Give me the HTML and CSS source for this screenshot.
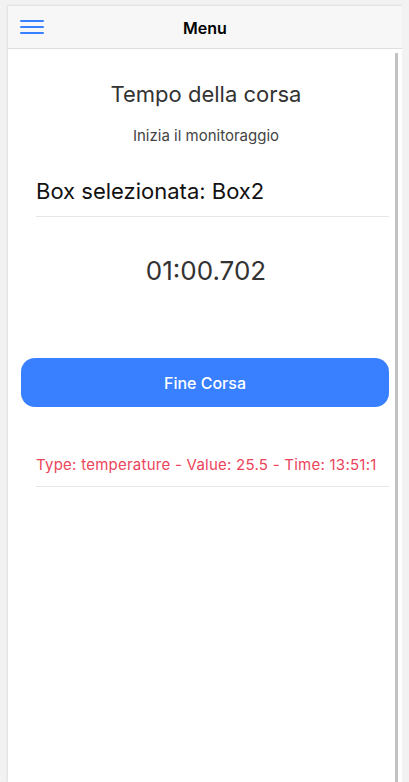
FILE: index.html
```html
<!DOCTYPE html>
<html lang="it">
<head>
<meta charset="utf-8">
<title>Menu</title>
<link rel="stylesheet" href="styles.css">
</head>
<body>
<div class="frame">
  <header class="toolbar">
    <button class="menu-btn" aria-label="menu">
      <svg width="24" height="16" viewBox="0 0 24 16"><path d="M1 2h22M1 8h22M1 14h22" stroke="#3880ff" stroke-width="2" stroke-linecap="round" fill="none"/></svg>
    </button>
    <div class="toolbar-title">Menu</div>
    <div class="toolbar-spacer"></div>
  </header>
  <div class="content-wrap">
    <main class="content">
      <h1 class="title">Tempo della corsa</h1>
      <p class="subtitle">Inizia il monitoraggio</p>
      <div class="item box-item">Box selezionata: Box2</div>
      <div class="timer">01:00.702</div>
      <button class="end-btn">Fine Corsa</button>
      <div class="item reading">Type: temperature - Value: 25.5 - Time: 13:51:1</div>
    </main>
    <div class="scrollbar"></div>
  </div>
</div>
</body>
</html>
```

FILE: styles.css
```css
* { box-sizing: border-box; }
html, body { height: 100%; }
body {
  margin: 0;
  background: #f1f2f1;
  font-family: Inter, "Noto Sans", sans-serif;
  overflow: hidden;
}
.frame {
  margin: 5px 7px 0 8px;
  height: 777px;
  display: flex;
  flex-direction: column;
  background: #fff;
  box-shadow: -1px 0 2px rgba(0,0,0,0.08);
}
.toolbar {
  height: 44px;
  flex: none;
  display: flex;
  align-items: center;
  background: #f7f7f7;
  border-top: 1px solid #e4e4e4;
  border-bottom: 1px solid #dedede;
}
.menu-btn {
  border: 0;
  background: none;
  padding: 0;
  margin-left: 12px;
  width: 24px;
  height: 16px;
  display: flex;
}
.toolbar-title {
  flex: 1;
  text-align: center;
  font-size: 16px;
  font-weight: 600;
  color: #000;
  padding-top: 2px;
}
.toolbar-spacer { width: 36px; }
.content-wrap {
  flex: 1;
  display: flex;
}
.content {
  flex: 1;
  display: flex;
  flex-direction: column;
  padding: 0 4px 0 13px;
}
.scrollbar {
  width: 3px;
  margin: 4px 4px 0 0;
  background: #c2c2c2;
}
.title {
  margin: 32px 0 0;
  text-align: center;
  font-size: 22px;
  font-weight: 400;
  line-height: 26px;
  color: #333;
}
.subtitle {
  margin: 20px 0 0;
  text-align: center;
  font-size: 15px;
  line-height: 18px;
  color: #444;
}
.item {
  margin-left: 15px;
  margin-right: 2px;
  border-bottom: 1px solid #e6e6e6;
}
.box-item {
  margin-top: 33px;
  font-size: 22px;
  line-height: 27px;
  padding-bottom: 11px;
  color: #111;
}
.timer {
  margin-top: 39px;
  text-align: center;
  font-size: 26px;
  line-height: 30px;
  color: #333;
}
.end-btn {
  margin: 72px 2px 0 0;
  height: 49px;
  border: 0;
  border-radius: 14px;
  background: #3880ff;
  color: #fff;
  font-family: inherit;
  font-size: 16px;
  font-weight: 500;
}
.reading {
  margin-top: 48px;
  font-size: 15px;
  letter-spacing: 0.25px;
  line-height: 20px;
  padding-bottom: 11px;
  color: #eb445a;
  white-space: nowrap;
  overflow: hidden;
}
```
